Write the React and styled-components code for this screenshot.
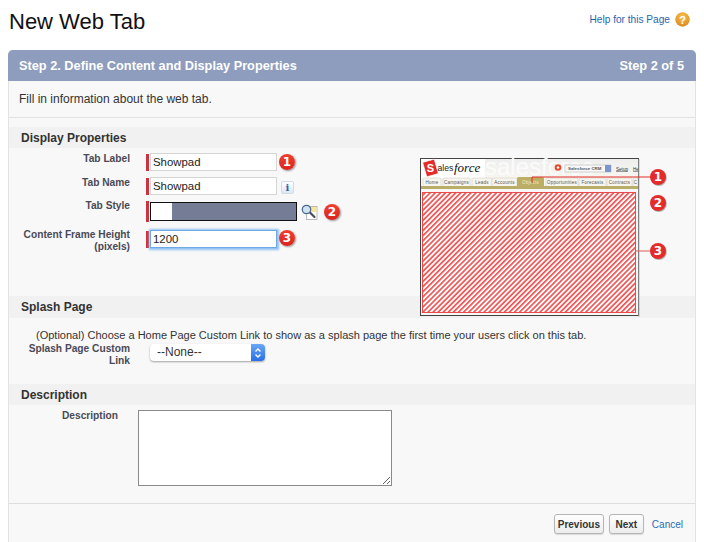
import React from 'react';
import styled, { createGlobalStyle } from 'styled-components';

const Global = createGlobalStyle`
  html, body { margin: 0; padding: 0; background: #fff; height: 542px; overflow: hidden; }
  body { font-family: "Liberation Sans", Arial, sans-serif; color: #333; }
  * { box-sizing: border-box; }
`;

const Page = styled.div`
  width: 704px;
  height: 542px;
  padding: 0 8px;
  overflow: hidden;
`;
const TopBar = styled.div`
  height: 50px;
  display: flex;
  align-items: flex-start;
  justify-content: space-between;
`;
const Title = styled.h1`
  margin: 8px 0 0 1px;
  font-size: 22px;
  line-height: 28px;
  font-weight: 400;
  color: #111;
`;
const HelpLink = styled.a`
  margin: 9px 6px 0 0;
  display: flex;
  align-items: center;
  gap: 5px;
  font-size: 10.15px;
  line-height: 18px;
  color: #1f65ad;
`;
const HelpText = styled.span`
  padding-top: 2px;
`;
const Panel = styled.div`
  height: 520px;
  background: #f8f8f8;
  border: 1px solid #e3e3e3;
  border-top: 0;
  border-radius: 5px 5px 0 0;
`;
const PanelHeader = styled.div`
  height: 31px;
  margin: 0 -1px;
  padding: 0 12px 0 11px;
  display: flex;
  align-items: center;
  justify-content: space-between;
  background: #8e9dbe;
  border-radius: 5px 5px 0 0;
  color: #fff;
  font-weight: 700;
  font-size: 12.75px;
`;
const Intro = styled.div`
  height: 37px;
  padding: 0 10px;
  display: flex;
  align-items: center;
  font-size: 12px;
  color: #333;
  border-bottom: 1px solid #e2e2e2;
`;
const SectionHead = styled.h3`
  margin: ${p => p.$top || 0}px 0 0;
  height: ${p => p.$h || 21}px;
  padding: 0 12px;
  display: flex;
  align-items: center;
  background: #f1f1f1;
  color: #333;
  font-size: 12px;
  font-weight: 700;
`;
const DisplayBody = styled.div`
  height: 148px;
  display: flex;
`;
const FieldColumn = styled.div`
  width: 410px;
  padding-top: 5px;
`;
const FieldRow = styled.div`
  display: flex;
  align-items: flex-start;
  height: ${p => p.$h}px;
`;
const Label = styled.label`
  flex: none;
  width: ${p => p.$w || 121}px;
  margin-top: ${p => p.$lift ?? 0}px;
  text-align: right;
  font-size: 10.2px;
  line-height: 12px;
  font-weight: 700;
  color: #4a4a56;
`;
const RequiredBar = styled.span`
  flex: none;
  width: 3px;
  height: ${p => p.$h || 17}px;
  margin: ${p => p.$mt ?? 1}px 1px 0 16px;
  background: #cc3340;
`;
const TextInput = styled.input`
  width: 127px;
  height: 18px;
  padding: 0 2px;
  border: 1px solid ${p => (p.$focus ? '#6fa9e6' : '#d5d5d5')};
  background: #fff;
  font: 11.4px "Liberation Sans", Arial, sans-serif;
  color: #222;
  outline: 0;
  box-shadow: ${p => (p.$focus ? '0 0 2px 1.5px #8fc0f2' : 'none')};
`;
const Marker = styled.span`
  flex: none;
  width: 16px;
  height: 16px;
  margin: ${p => p.$mt ?? 1}px 0 0 ${p => p.$ml || 2}px;
  border-radius: 50%;
  display: flex;
  align-items: center;
  justify-content: center;
  background: linear-gradient(#f0402f, #d8231f);
  box-shadow: 1px 1px 2px rgba(0, 0, 0, 0.4);
  color: #fff;
  font: 700 12px "DejaVu Sans", sans-serif;
`;
const InfoButton = styled.span`
  flex: none;
  width: 13px;
  height: 13px;
  margin: 4px 0 0 4px;
  display: flex;
  align-items: center;
  justify-content: center;
  border: 1px solid #d3dbe6;
  border-radius: 2px;
  background: linear-gradient(#fff, #dde6f2);
  color: #2a62b0;
  font: 700 10px "DejaVu Serif", serif;
`;
const StyleSwatch = styled.div`
  width: 147px;
  height: 19px;
  display: flex;
  border: 1px solid #111;
  background: #757d96;
`;
const SwatchWhite = styled.span`
  width: 21px;
  background: #fff;
`;
const LookupIcon = styled.svg`
  flex: none;
  margin: 2px 0 0 4px;
`;
const PreviewSlot = styled.div`
  position: relative;
  z-index: 1;
  flex: none;
  width: 252px;
  height: 160px;
  margin-top: 9px;
`;
const SplashNote = styled.p`
  margin: 0;
  padding: 10px 0 0 27px;
  font-size: 11.03px;
  line-height: 14px;
  color: #333;
`;
const SplashBody = styled.div`
  height: 66px;
`;
const SplashRow = styled.div`
  display: flex;
  align-items: flex-start;
  padding-top: 1px;
`;
const SelectBox = styled.div`
  width: 115px;
  height: 17px;
  margin: 1px 0 0 20px;
  display: flex;
  border-radius: 4px;
  background: #fff;
  box-shadow: 0 1px 2px rgba(0, 0, 0, 0.35);
  font-size: 12px;
  color: #333;
`;
const SelectText = styled.span`
  flex: 1;
  padding-left: 7px;
  line-height: 17px;
`;
const Stepper = styled.span`
  width: 14px;
  display: flex;
  align-items: center;
  justify-content: center;
  border-radius: 0 4px 4px 0;
  background: linear-gradient(#6aa8f5, #2a6fe6);
`;
const DescriptionBody = styled.div`
  height: 99px;
  padding-top: 5px;
  display: flex;
  align-items: flex-start;
  border-bottom: 1px solid #dedede;
`;
const DescArea = styled.textarea`
  width: 254px;
  height: 76px;
  margin-left: 20px;
  border: 1px solid #8a8a8a;
  background: #fff;
  outline: 0;
  padding: 2px;
`;
const Footer = styled.div`
  padding: 10px 12px 0 0;
  display: flex;
  justify-content: flex-end;
  align-items: center;
  gap: 5px;
`;
const Button = styled.button`
  height: 20px;
  width: ${p => p.$w}px;
  padding: 0;
  border: 1px solid #b5b5b5;
  border-radius: 3px;
  background: linear-gradient(#fff, #ececec);
  box-shadow: 0 1px 1px rgba(0, 0, 0, 0.12);
  font: 700 10px "Liberation Sans", Arial, sans-serif;
  color: #333;
`;
const CancelLink = styled.a`
  margin-left: 3px;
  font-size: 10px;
  color: #2a6db5;
`;

const Callout = ({ cx, cy, n }) => (
  <g>
    <circle cx={cx + 0.8} cy={cy + 1} r="8" fill="#000" opacity="0.28" />
    <circle cx={cx} cy={cy} r="8" fill="#e32c2a" />
    <text x={cx} y={cy + 4.3} textAnchor="middle" fontFamily="DejaVu Sans" fontWeight="700" fontSize="12" fill="#fff">{n}</text>
  </g>
);

const tabs = [
  ['Home', 4, 18], ['Campaigns', 24, 27], ['Leads', 53, 20], ['Accounts', 73, 25],
  ['Opportunities', 127, 32], ['Forecasts', 160, 27], ['Contracts', 188, 25], ['C', 214, 5],
];

const Preview = () => (
  <svg width="252" height="160" viewBox="0 0 252 160">
    <defs>
      <pattern id="hatch" width="3.6" height="3.6" patternUnits="userSpaceOnUse" patternTransform="rotate(45)">
        <rect width="3.6" height="3.6" fill="#fff" />
        <rect width="1.7" height="3.6" fill="#ee5454" />
      </pattern>
      <linearGradient id="band" x1="0" y1="0" x2="0" y2="1">
        <stop offset="0" stopColor="#eeeeee" />
        <stop offset="1" stopColor="#f7f6f0" />
      </linearGradient>
      <clipPath id="frame"><rect x="1" y="1" width="218" height="157" /></clipPath>
    </defs>
    <rect x="1.5" y="1.5" width="218" height="157" fill="#f7f7f7" stroke="#444" strokeWidth="1" />
    <rect x="219.5" y="2" width="1" height="158" fill="#bbb" />
    <g clipPath="url(#frame)">
      <rect x="2" y="2" width="217" height="19" fill="url(#band)" />
      <rect x="2" y="2" width="64" height="19" fill="#fff" />
      <text x="66" y="18" fontFamily="Liberation Sans" fontSize="24" fill="#fbfbfb">salesforce</text>
      <rect x="5.5" y="3.5" width="12" height="15" fill="#e32c2a" stroke="#fff" strokeWidth="0.6" transform="rotate(-16 11.5 11)" />
      <text x="11.5" y="15" textAnchor="middle" fontFamily="Liberation Sans" fontWeight="700" fontSize="11" fill="#fff">S</text>
      <text x="18.5" y="13.5" fontFamily="Liberation Sans" fontSize="8.6" fill="#222">ales</text>
      <text x="35" y="14.5" fontFamily="Liberation Serif" fontStyle="italic" fontSize="13" fill="#111">force</text>
      <circle cx="139" cy="10.5" r="3.3" fill="#e8492c" />
      <circle cx="139" cy="10.5" r="1.2" fill="#fff" />
      <rect x="146" y="8" width="46" height="7" fill="#f8f8f8" stroke="#aaa" strokeWidth="0.5" />
      <text x="149" y="13.3" fontFamily="Liberation Sans" fontSize="4.4" fontWeight="700" fill="#555">Salesforce CRM</text>
      <rect x="186" y="8" width="6" height="7" fill="#7d95cc" />
      <text x="197" y="13.5" fontFamily="Liberation Sans" fontSize="4.6" fill="#333" textDecoration="underline">Setup</text>
      <text x="214" y="13.5" fontFamily="Liberation Sans" fontSize="4.6" fill="#333" textDecoration="underline">He</text>
      {tabs.map(([t, x, w]) => (
        <g key={t}>
          <rect x={x} y="21" width={w} height="9" rx="1.5" fill="#f6f5ee" stroke="#c9c6b4" strokeWidth="0.5" />
          <text x={x + w / 2} y="27" textAnchor="middle" fontFamily="Liberation Sans" fontSize="4.5" letterSpacing="0.25" fill="#555">{t}</text>
        </g>
      ))}
      <rect x="98" y="20" width="27" height="10" rx="1.5" fill="#bcae63" />
      <text x="111.5" y="27" textAnchor="middle" fontFamily="Liberation Sans" fontSize="4.5" letterSpacing="0.25" fill="#f3edc8">Objects</text>
      <rect x="2" y="29" width="217" height="3" fill="#b9ad68" />
      <rect x="3.5" y="35.5" width="213" height="120" fill="url(#hatch)" stroke="#ea4a4a" strokeWidth="1" />
    </g>
    <path d="M113 26 V20 H232" fill="none" stroke="#e32c2a" strokeWidth="1" />
    <path d="M217 94 H232" fill="none" stroke="#d96060" strokeWidth="1" />
    <Callout cx={239} cy={20} n="1" />
    <Callout cx={239} cy={46} n="2" />
    <Callout cx={239} cy={94} n="3" />
  </svg>
);

export default function App() {
  return (
    <Page>
      <Global />
      <TopBar>
        <Title>New Web Tab</Title>
        <HelpLink>
          <HelpText>Help for this Page</HelpText>
          <svg width="15" height="15" viewBox="0 0 15 15">
            <defs>
              <radialGradient id="help" cx="50%" cy="30%" r="70%">
                <stop offset="0" stopColor="#f6c24e" />
                <stop offset="1" stopColor="#dd8a1c" />
              </radialGradient>
            </defs>
            <circle cx="7.5" cy="7.5" r="7.2" fill="url(#help)" />
            <text x="7.5" y="11.5" textAnchor="middle" fontFamily="Liberation Sans" fontWeight="700" fontSize="11" fill="#fff">?</text>
          </svg>
        </HelpLink>
      </TopBar>
      <Panel>
        <PanelHeader>
          <span>Step 2. Define Content and Display Properties</span>
          <span>Step 2 of 5</span>
        </PanelHeader>
        <Intro>Fill in information about the web tab.</Intro>
        <SectionHead $top={9}>Display Properties</SectionHead>
        <DisplayBody>
          <FieldColumn>
            <FieldRow $h={24}>
              <Label>Tab Label</Label>
              <RequiredBar />
              <TextInput readOnly value="Showpad" />
              <Marker>1</Marker>
            </FieldRow>
            <FieldRow $h={25}>
              <Label>Tab Name</Label>
              <RequiredBar />
              <TextInput readOnly value="Showpad" />
              <InfoButton>i</InfoButton>
            </FieldRow>
            <FieldRow $h={28}>
              <Label $lift={-2}>Tab Style</Label>
              <RequiredBar $h={21} $mt={-1} />
              <StyleSwatch><SwatchWhite /></StyleSwatch>
              <LookupIcon width="17" height="17" viewBox="0 0 17 17">
                <rect x="5.5" y="2.5" width="10.5" height="13" fill="#fff" stroke="#aaa" strokeWidth="0.8" />
                <rect x="10" y="3" width="5.5" height="5" fill="#f8e39a" />
                <path d="M8.5 8 L13.5 13" stroke="#4a4f5c" strokeWidth="2.2" strokeLinecap="round" />
                <circle cx="5.5" cy="5.5" r="4.2" fill="#cfe2f4" stroke="#4f6a8a" strokeWidth="1.3" />
              </LookupIcon>
              <Marker $ml={6} $mt={2}>2</Marker>
            </FieldRow>
            <FieldRow $h={30}>
              <Label $lift={-1}>Content Frame Height (pixels)</Label>
              <RequiredBar />
              <TextInput $focus readOnly value="1200" />
              <Marker $mt={0}>3</Marker>
            </FieldRow>
          </FieldColumn>
          <PreviewSlot><Preview /></PreviewSlot>
        </DisplayBody>
        <SectionHead $h={22}>Splash Page</SectionHead>
        <SplashBody>
          <SplashNote>(Optional) Choose a Home Page Custom Link to show as a splash page the first time your users click on this tab.</SplashNote>
          <SplashRow>
            <Label>Splash Page Custom Link</Label>
            <SelectBox>
              <SelectText>--None--</SelectText>
              <Stepper>
                <svg width="8" height="12" viewBox="0 0 8 12" fill="none" stroke="#fff" strokeWidth="1.4">
                  <path d="M1.5 4.5 L4 2 L6.5 4.5 M1.5 7.5 L4 10 L6.5 7.5" />
                </svg>
              </Stepper>
            </SelectBox>
          </SplashRow>
        </SplashBody>
        <SectionHead>Description</SectionHead>
        <DescriptionBody>
          <Label $w={109}>Description</Label>
          <DescArea readOnly />
        </DescriptionBody>
        <Footer>
          <Button $w={50}>Previous</Button>
          <Button $w={35}>Next</Button>
          <CancelLink>Cancel</CancelLink>
        </Footer>
      </Panel>
    </Page>
  );
}
